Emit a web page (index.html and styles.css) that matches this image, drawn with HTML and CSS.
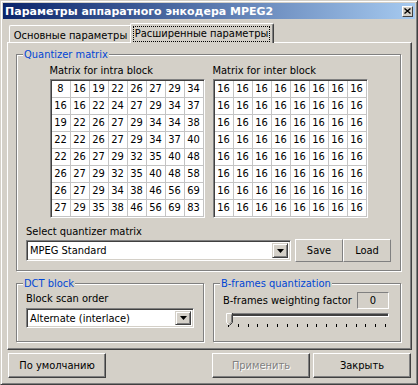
FILE: index.html
```html
<!DOCTYPE html>
<html>
<head>
 <meta charset="utf-8">
 <title>Параметры аппаратного энкодера MPEG2</title>
 <link rel="stylesheet" href="styles.css">
</head>
<body>
<div class="Window">
 <div class="TitleBar">
  <span class="TitleText">Параметры аппаратного энкодера MPEG2</span>
  <span class="CloseButton">
   <svg width="7" height="6" viewBox="0 0 7 6"><path d="M0.5 0.5L6.5 5.5M6.5 0.5L0.5 5.5" stroke="#000" stroke-width="1.4"/></svg>
  </span>
 </div>
 <div class="WindowBody">
  <div class="Tabs">
   <div class="Tab">Основные параметры</div>
   <div class="Tab TabActive"><div class="Focus">Расширенные параметры</div></div>
  </div>
  <div class="Panel">
   <fieldset class="Group GroupQuant">
    <legend>Quantizer matrix</legend>
    <div class="Matrices">
     <div class="Matrix">
      <div class="Caption">Matrix for intra block</div>
      <div class="GridBox">
       <table class="Grid">
        <tr><td>8</td><td>16</td><td>19</td><td>22</td><td>26</td><td>27</td><td>29</td><td>34</td></tr>
        <tr><td>16</td><td>16</td><td>22</td><td>24</td><td>27</td><td>29</td><td>34</td><td>37</td></tr>
        <tr><td>19</td><td>22</td><td>26</td><td>27</td><td>29</td><td>34</td><td>34</td><td>38</td></tr>
        <tr><td>22</td><td>22</td><td>26</td><td>27</td><td>29</td><td>34</td><td>37</td><td>40</td></tr>
        <tr><td>22</td><td>26</td><td>27</td><td>29</td><td>32</td><td>35</td><td>40</td><td>48</td></tr>
        <tr><td>26</td><td>27</td><td>29</td><td>32</td><td>35</td><td>40</td><td>48</td><td>58</td></tr>
        <tr><td>26</td><td>27</td><td>29</td><td>34</td><td>38</td><td>46</td><td>56</td><td>69</td></tr>
        <tr><td>27</td><td>29</td><td>35</td><td>38</td><td>46</td><td>56</td><td>69</td><td>83</td></tr>
       </table>
      </div>
     </div>
     <div class="Matrix">
      <div class="Caption">Matrix for inter block</div>
      <div class="GridBox">
       <table class="Grid">
        <tr><td>16</td><td>16</td><td>16</td><td>16</td><td>16</td><td>16</td><td>16</td><td>16</td></tr>
        <tr><td>16</td><td>16</td><td>16</td><td>16</td><td>16</td><td>16</td><td>16</td><td>16</td></tr>
        <tr><td>16</td><td>16</td><td>16</td><td>16</td><td>16</td><td>16</td><td>16</td><td>16</td></tr>
        <tr><td>16</td><td>16</td><td>16</td><td>16</td><td>16</td><td>16</td><td>16</td><td>16</td></tr>
        <tr><td>16</td><td>16</td><td>16</td><td>16</td><td>16</td><td>16</td><td>16</td><td>16</td></tr>
        <tr><td>16</td><td>16</td><td>16</td><td>16</td><td>16</td><td>16</td><td>16</td><td>16</td></tr>
        <tr><td>16</td><td>16</td><td>16</td><td>16</td><td>16</td><td>16</td><td>16</td><td>16</td></tr>
        <tr><td>16</td><td>16</td><td>16</td><td>16</td><td>16</td><td>16</td><td>16</td><td>16</td></tr>
       </table>
      </div>
     </div>
    </div>
    <div class="Caption SelectCaption">Select quantizer matrix</div>
    <div class="ComboRow">
     <div class="Combo ComboWide">
      <span class="ComboText">MPEG Standard</span>
      <span class="DropButton"><svg width="7" height="4" viewBox="0 0 7 4"><path d="M0 0H7L3.5 4Z" fill="#000"/></svg></span>
     </div>
     <button class="Button ButtonSmall">Save</button>
     <button class="Button ButtonSmall">Load</button>
    </div>
   </fieldset>
   <div class="GroupRow">
    <fieldset class="Group GroupDct">
     <legend>DCT block</legend>
     <div class="Caption">Block scan order</div>
     <div class="Combo ComboShort">
      <span class="ComboText">Alternate (interlace)</span>
      <span class="DropButton"><svg width="7" height="4" viewBox="0 0 7 4"><path d="M0 0H7L3.5 4Z" fill="#000"/></svg></span>
     </div>
    </fieldset>
    <fieldset class="Group GroupBframes">
     <legend>B-frames quantization</legend>
     <div class="FactorRow">
      <span>B-frames weighting factor</span>
      <span class="ValueBox">0</span>
     </div>
     <div class="Slider">
      <div class="Track"></div>
      <svg class="Thumb" width="7" height="13" viewBox="0 0 7 13">
       <path d="M0 0H6V9L3 12L0 9Z" fill="#D4D0C8"/>
       <path d="M0.5 9.5V0.5H5.5" stroke="#FFFFFF" fill="none"/>
       <path d="M0.5 9.5L3 12" stroke="#FFFFFF" fill="none"/>
       <path d="M6.5 0V9.5L3.5 12.5" stroke="#404040" fill="none"/>
       <path d="M5.5 1.5V9L3 11.5" stroke="#808080" fill="none"/>
      </svg>
      <div class="Ticks">
       <span class="Tick"></span><span class="Tick"></span><span class="Tick"></span><span class="Tick"></span>
       <span class="Tick"></span><span class="Tick"></span><span class="Tick"></span><span class="Tick"></span>
       <span class="Tick"></span><span class="Tick"></span><span class="Tick"></span><span class="Tick"></span>
       <span class="Tick"></span><span class="Tick"></span><span class="Tick"></span><span class="Tick"></span>
       <span class="Tick"></span>
      </div>
     </div>
    </fieldset>
   </div>
  </div>
  <div class="Buttons">
   <button class="Button ButtonBig">По умолчанию</button>
   <span class="Spacer"></span>
   <button class="Button ButtonBig" disabled>Применить</button>
   <button class="Button ButtonBig">Закрыть</button>
  </div>
 </div>
</div>
</body>
</html>
```
FILE: styles.css
```css
body {
 margin:0;
 background-color:#D4D0C8;
}
body, button {
 font-family:"DejaVu Sans Condensed", "DejaVu Sans", sans-serif;
 font-size:11px;
 line-height:13px;
 color:#000000;
}

.Window {
 width:418px;
 height:385px;
 box-sizing:border-box;
 display:flex;
 flex-direction:column;
 padding:2px;
 border:1px solid;
 border-color:#D4D0C8 #404040 #404040 #D4D0C8;
 box-shadow:inset 1px 1px #FFFFFF, inset -1px -1px #808080;
 background:#D4D0C8;
}

/* Caption */
.TitleBar {
 display:flex;
 align-items:center;
 justify-content:space-between;
 height:16px;
 padding:0 2px;
 background:linear-gradient(to right, #0A246A, #A6CAF0);
 color:#FFFFFF;
 font-family:"DejaVu Sans", sans-serif;
 font-weight:bold;
}
.CloseButton {
 display:flex;
 align-items:center;
 justify-content:center;
 width:11px;
 height:11px;
 box-sizing:border-box;
 border:1px solid;
 border-color:#FFFFFF #404040 #404040 #FFFFFF;
 background:#D4D0C8;
}

.WindowBody {
 display:flex;
 flex-direction:column;
 padding:4px 3px 0 4px;
}

/* Tabs */
.Tabs {
 display:flex;
 align-items:flex-end;
 height:19px;
 padding-left:2px;
}
.Tab {
 box-sizing:border-box;
 width:123px;
 height:17px;
 padding-top:3px;
 text-align:center;
 border:1px solid;
 border-bottom:none;
 border-color:#FFFFFF #404040 #404040 #FFFFFF;
 border-radius:2px 2px 0 0;
 box-shadow:inset -1px 0 #808080;
 white-space:nowrap;
}
.TabActive {
 position:relative;
 z-index:1;
 width:144px;
 height:20px;
 margin:0 0 -1px -2px;
 padding:2px 3px 0 2px;
 background:#D4D0C8;
}
.Focus {
 height:16px;
 box-sizing:border-box;
 border:1px dotted #000000;
}

.Panel {
 box-sizing:border-box;
 width:405px;
 height:308px;
 padding:5px 0 0 8px;
 border:1px solid;
 border-color:#FFFFFF #404040 #404040 #FFFFFF;
 box-shadow:inset -1px -1px #808080;
}

/* Group boxes */
.Group {
 box-sizing:border-box;
 min-width:0;
 margin:0;
 padding:3px 9px 8px 9px;
 border:1px solid #808080;
 box-shadow:inset 1px 1px #FFFFFF, 1px 1px #FFFFFF;
}
.Group legend {
 margin-left:-3px;
 padding:0 1px;
 color:#0046D5;
 background:#D4D0C8;
 line-height:13px;
}
.GroupQuant {
 width:385px;
}
.GroupRow {
 display:flex;
 gap:9px;
 margin-top:6px;
}
.GroupDct,
.GroupBframes {
 width:188px;
 padding-top:2px;
}
.GroupBframes {
 padding-right:11px;
 padding-bottom:9px;
}

.Matrices {
 display:flex;
 justify-content:center;
 gap:8px;
}
.Caption {
 height:13px;
 margin-bottom:2px;
 white-space:nowrap;
}
.SelectCaption {
 margin:7px 0 1px;
}
.GridBox {
 border:1px solid;
 border-color:#808080 #FFFFFF #FFFFFF #808080;
 box-shadow:inset 1px 1px #404040;
 padding:1px 0 0 1px;
 background:#FFFFFF;
}
.Grid {
 border-collapse:separate;
 border-spacing:0;
}
.Grid td {
 width:18px;
 height:16px;
 padding:0;
 text-align:center;
 line-height:16px;
 border-right:1px solid #C4C4C4;
 border-bottom:1px solid #C4C4C4;
 background:#FFFFFF;
}

/* Combo boxes and buttons */
.ComboRow {
 display:flex;
 align-items:center;
}
.Combo {
 display:flex;
 align-items:center;
 box-sizing:border-box;
 height:21px;
 padding:2px;
 border:1px solid;
 border-color:#808080 #FFFFFF #FFFFFF #808080;
 box-shadow:inset 1px 1px #404040, inset -1px -1px #D4D0C8;
 background:#FFFFFF;
}
.ComboWide {
 width:265px;
 margin-right:4px;
}
.ComboShort {
 width:168px;
 height:20px;
 margin-top:3px;
}
.ComboText {
 flex:1;
 padding-left:1px;
 white-space:nowrap;
}
.DropButton {
 display:flex;
 align-items:center;
 justify-content:center;
 box-sizing:border-box;
 width:16px;
 height:100%;
 border:1px solid;
 border-color:#D4D0C8 #404040 #404040 #D4D0C8;
 box-shadow:inset 1px 1px #FFFFFF, inset -1px -1px #808080;
 background:#D4D0C8;
}
.Button {
 box-sizing:border-box;
 margin:0;
 padding:0;
 border:1px solid;
 border-color:#FFFFFF #404040 #404040 #FFFFFF;
 box-shadow:inset -1px -1px #808080;
 background:#D4D0C8;
}
.ButtonSmall {
 width:48px;
 height:23px;
 border-color:#FFFFFF #808080 #808080 #FFFFFF;
 box-shadow:none;
}
.ButtonBig {
 width:98px;
 height:25px;
}
.Button:disabled {
 color:#808080;
 text-shadow:1px 1px #FFFFFF;
}
.Buttons {
 display:flex;
 gap:3px;
 margin-top:3px;
 padding:0 1px;
}
.Spacer {
 flex:1;
}

/* B-frames */
.FactorRow {
 display:flex;
 align-items:center;
 justify-content:space-between;
 height:17px;
 white-space:nowrap;
}
.ValueBox {
 box-sizing:border-box;
 width:32px;
 height:17px;
 text-align:center;
 line-height:15px;
 border:1px solid;
 border-color:#808080 #FFFFFF #FFFFFF #808080;
}
.Slider {
 position:relative;
 height:19px;
 margin:3px 0 0 5px;
}
.Track {
 height:2px;
 margin-top:4px;
 border:1px solid;
 border-color:#808080 #FFFFFF #FFFFFF #808080;
 background:#404040;
}
.Thumb {
 position:absolute;
 left:-2px;
 top:0;
}
.Ticks {
 display:flex;
 justify-content:space-between;
 width:158px;
 margin-top:7px;
}
.Tick {
 width:1px;
 height:3px;
 background:#000000;
}
```
